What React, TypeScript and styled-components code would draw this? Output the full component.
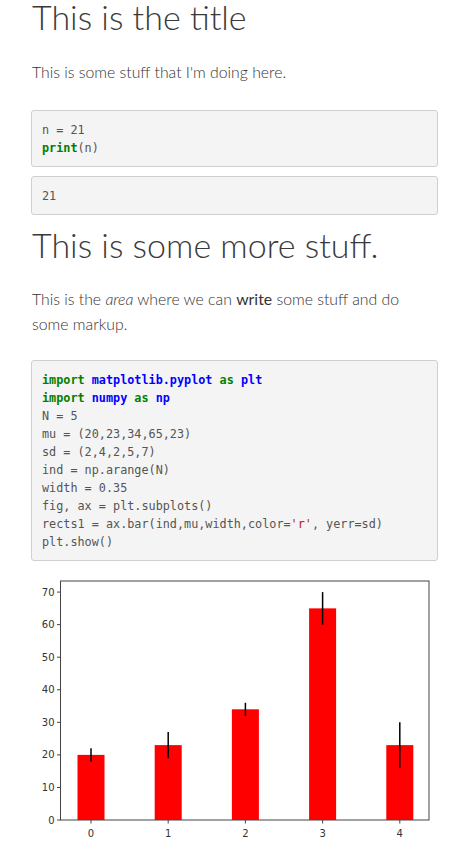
import React from "react";
import styled, { createGlobalStyle } from "styled-components";

const Global = createGlobalStyle`
  html, body { margin: 0; padding: 0; background: #fff; }
  body { font-family: Lato, "Open Sans", sans-serif; color: #333; }
`;

const Page = styled.div`
  width: 407px;
  padding: 0 20px 0 31px;
`;

const Title = styled.h1<{ $top: number }>`
  font-family: Lato, sans-serif;
  font-weight: 300;
  font-size: 34px;
  line-height: 40px;
  color: #3a3a3a;
  margin: ${(p) => p.$top}px 0 0 1px;
`;

const Para = styled.p<{ $top: number }>`
  font-family: Lato, sans-serif;
  font-weight: 300;
  font-size: 15.8px;
  line-height: 25px;
  color: #333;
  margin: ${(p) => p.$top}px 0 0 1px;
`;

const Pre = styled.pre<{ $top: number }>`
  margin: ${(p) => p.$top}px 0 0;
  padding: 10px 10px 9px;
  background: #f4f4f4;
  border: 1px solid #cfcfcf;
  border-radius: 3px;
  font-family: "DejaVu Sans Mono", "Liberation Mono", monospace;
  font-size: 11.8px;
  line-height: 18px;
  color: #555;
  white-space: pre;
`;

const Kw = styled.span`
  color: #008000;
  font-weight: bold;
`;
const Mod = styled.span`
  color: #0000ff;
  font-weight: bold;
`;
const Str = styled.span`
  color: #ba2121;
`;

const Figure = styled.div`
  margin-top: 5px;
  height: 290px;
`;

const OX = 31;
const OY = 565;
const X0 = 91;
const DX = 77.2;
const Y0 = 819;
const DY = 3.256;
const mu = [20, 23, 34, 65, 23];
const sd = [2, 4, 2, 5, 7];

function Chart() {
  const px = (i: number) => X0 + DX * i - OX;
  const py = (v: number) => Y0 - DY * v - OY;
  const left = 60.5 - OX;
  const right = 429 - OX;
  const top = 580 - OY;
  const bottom = py(0);
  const barW = 0.35 * DX;
  return (
    <svg width={407} height={290} viewBox="0 0 407 290">
      {mu.map((m, i) => (
        <rect key={i} x={px(i) - barW / 2} y={py(m)} width={barW} height={bottom - py(m)} fill="#ff0000" />
      ))}
      {mu.map((m, i) => (
        <line key={"e" + i} x1={px(i)} x2={px(i)} y1={py(m - sd[i])} y2={py(m + sd[i])} stroke="#000" strokeWidth={1.5} />
      ))}
      <rect x={left} y={top} width={right - left} height={bottom - top} fill="none" stroke="#444" strokeWidth={1} />
      {[0, 10, 20, 30, 40, 50, 60, 70].map((v) => (
        <g key={"y" + v}>
          <line x1={left - 3.5} x2={left} y1={py(v)} y2={py(v)} stroke="#444" strokeWidth={1} />
          <text x={left - 6} y={py(v) + 3.5} fontSize={10} fontFamily="DejaVu Sans" textAnchor="end" fill="#333">
            {v}
          </text>
        </g>
      ))}
      {[0, 1, 2, 3, 4].map((i) => (
        <g key={"x" + i}>
          <line x1={px(i)} x2={px(i)} y1={bottom} y2={bottom + 3.5} stroke="#444" strokeWidth={1} />
          <text x={px(i)} y={bottom + 17} fontSize={10} fontFamily="DejaVu Sans" textAnchor="middle" fill="#333">
            {i}
          </text>
        </g>
      ))}
    </svg>
  );
}

export default function App() {
  return (
    <>
      <Global />
      <Page>
        <Title $top={-3}>This is the title</Title>
        <Para $top={22}>This is some stuff that I'm doing here.</Para>
        <Pre $top={26}>
          {"n = 21\n"}
          <Kw>print</Kw>
          {"(n)"}
        </Pre>
        <Pre $top={9}>21</Pre>
        <Title $top={10}>This is some more stuff.</Title>
        <Para $top={21}>
          This is the <em>area</em> where we can <strong>write</strong> some stuff and do some markup.
        </Para>
        <Pre $top={24}>
          <Kw>import</Kw> <Mod>matplotlib.pyplot</Mod> <Kw>as</Kw> <Mod>plt</Mod>
          {"\n"}
          <Kw>import</Kw> <Mod>numpy</Mod> <Kw>as</Kw> <Mod>np</Mod>
          {"\nN = 5\nmu = (20,23,34,65,23)\nsd = (2,4,2,5,7)\nind = np.arange(N)\nwidth = 0.35\nfig, ax = plt.subplots()\nrects1 = ax.bar(ind,mu,width,color="}
          <Str>'r'</Str>
          {", yerr=sd)\nplt.show()"}
        </Pre>
        <Figure>
          <Chart />
        </Figure>
      </Page>
    </>
  );
}
